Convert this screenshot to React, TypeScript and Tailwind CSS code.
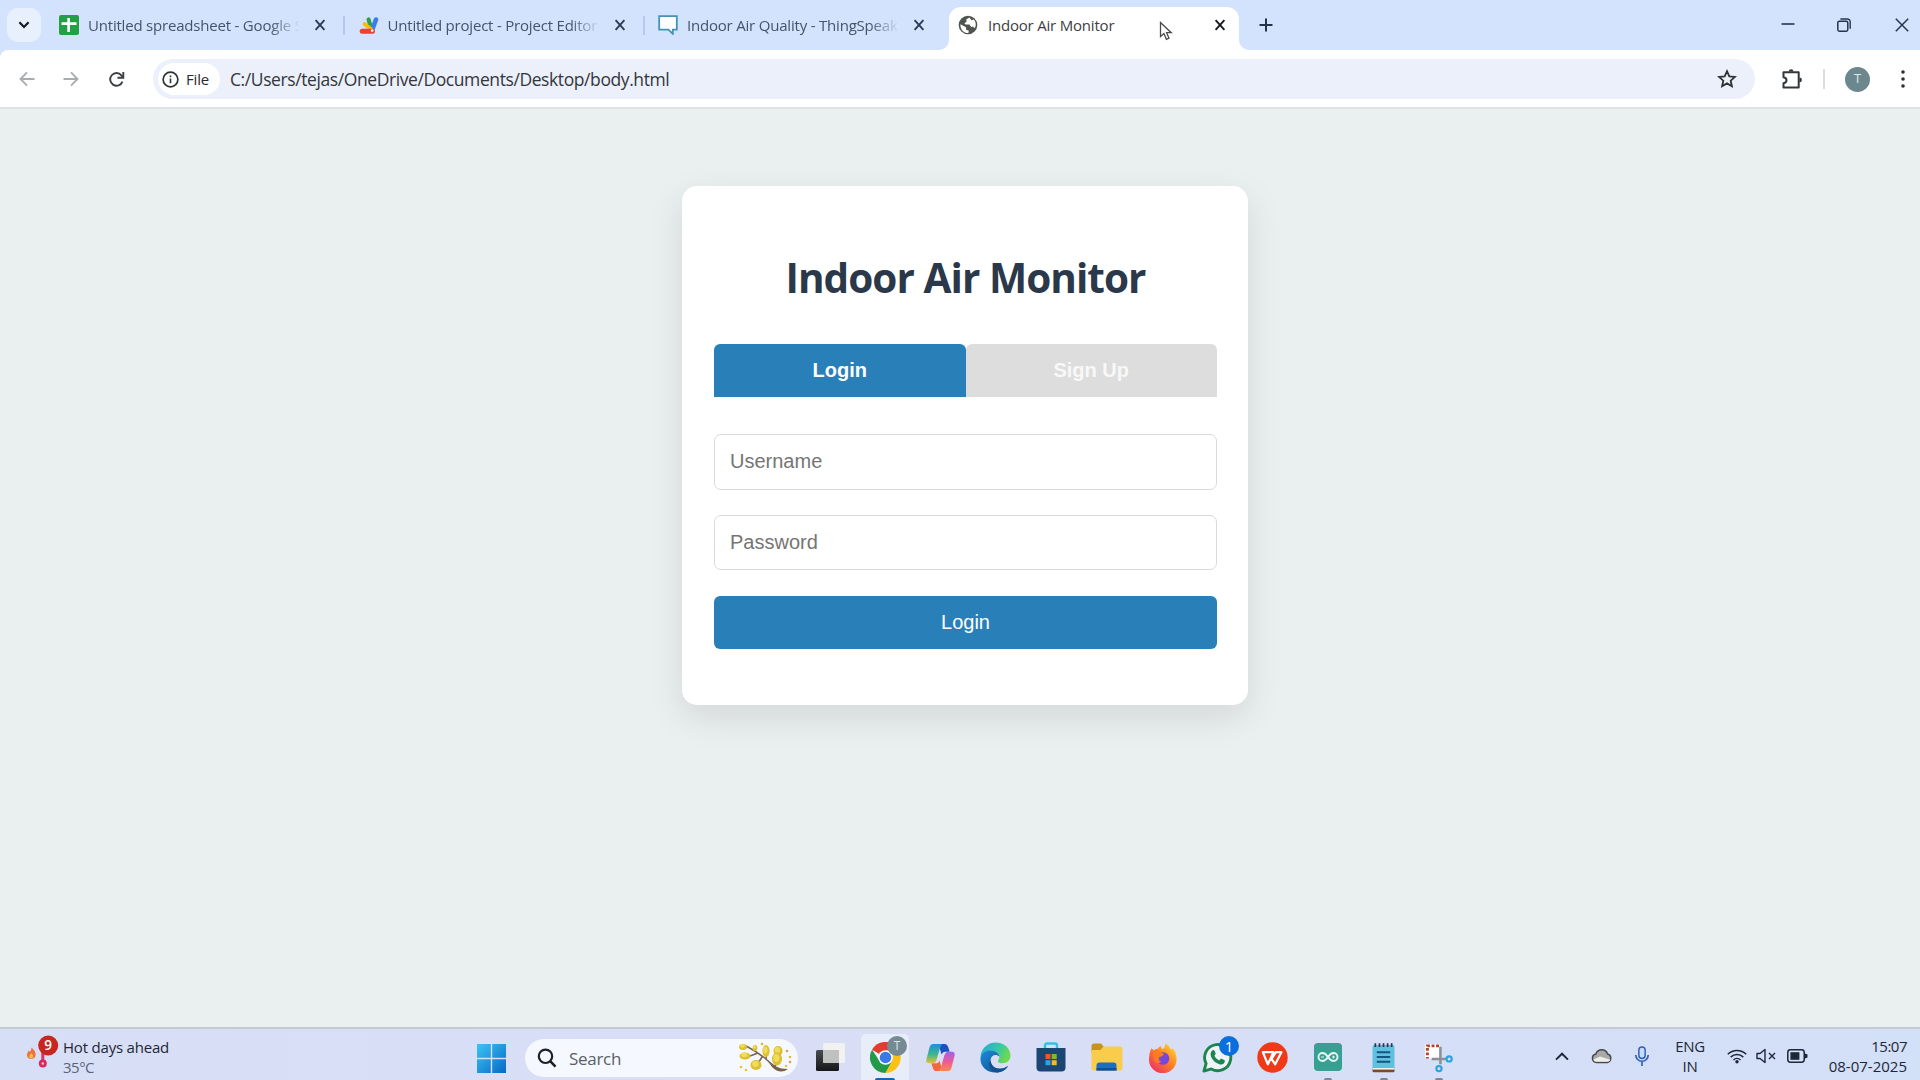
import type { ReactNode } from "react";

const ui = "font-['Open_Sans','Noto_Sans',sans-serif]";
const arial = "font-['Liberation_Sans',Arial,sans-serif]";

function Cross({ className }: { className: string }) {
  return (
    <svg viewBox="0 0 12 12" className={className}>
      <path d="M1.6 1.2 10.4 10.8M10.4 1.2 1.6 10.8" stroke="currentColor" strokeWidth="1.9" fill="none" />
    </svg>
  );
}

function SheetsIcon() {
  return (
    <svg viewBox="0 0 20 20" className="h-5 w-5">
      <rect width="20" height="20" rx="2" fill="#23a045" />
      <path d="M9.6 3v14M2.5 8.6h15" stroke="#fff" strokeWidth="2.6" />
    </svg>
  );
}

function AppsScriptIcon() {
  return (
    <svg viewBox="0 0 20 20" className="h-5 w-5">
      <path d="M12 13 9.600 4.500" stroke="#2e9e4f" strokeWidth="4.200" strokeLinecap="round" />
      <path d="M13.500 14 17 4.500" stroke="#3b7df0" strokeWidth="4.600" strokeLinecap="round" />
      <path d="M12 14 5.500 9" stroke="#fbbc04" strokeWidth="3.600" strokeLinecap="round" />
      <path d="M3.200 16.200h10.300" stroke="#ea4335" strokeWidth="5" strokeLinecap="round" />
      <circle cx="13.200" cy="15.600" r="1.300" fill="#fff" />
    </svg>
  );
}

function SpeechIcon() {
  return (
    <svg viewBox="0 0 20 20" className="h-5 w-5">
      <path d="M1.200 1.200h17.600v13.400h-4v4.200l-4.400-4.200H1.200z" fill="#fff" stroke="#4592b4" strokeWidth="1.800" />
    </svg>
  );
}

function GlobeIcon() {
  return (
    <svg viewBox="0 0 20 20" className="h-5 w-5">
      <circle cx="10" cy="10" r="9.300" fill="#50544f" />
      <path d="M2.400 9.200 8 12.200l.2 2.600 2.600 1-.4 2.200C6 18.200 2.200 14.800 2.400 9.200z" fill="#fff" />
      <path d="M11.400 2.600 8.200 4.600l.4 2.200-2.200 1.400 1.200 1.400h3.800l1.800 2.400 2-.4.8 1.400 1.200-.4a8 8 0 0 0-1.400-8l-2.200.6z" fill="#fff" />
    </svg>
  );
}

function TabTitle({ children, className }: { children: string; className: string }) {
  return (
    <div className={`w-[212px] whitespace-nowrap text-[15px] tracking-[-0.2px] text-[#465467] ${className}`}>{children}</div>
  );
}

function TabSeparator() {
  return <div className="ml-[17px] h-[19px] w-[2px] bg-[#b5c9ee]" />;
}

function Tab({ icon, title, fade, separator }: { icon: ReactNode; title: string; fade: string; separator?: boolean }) {
  return (
    <div className="flex h-full w-[299.5px] shrink-0 items-center">
      <div className="mr-[9px] shrink-0">{icon}</div>
      <TabTitle className={fade}>{title}</TabTitle>
      <Cross className="ml-[14px] h-[12px] w-[12px] text-[#2d3a50]" />
      {separator ? <TabSeparator /> : null}
    </div>
  );
}

function TabStrip() {
  const fade = "[mask-image:linear-gradient(to_right,black_86%,transparent)]";
  return (
    <div className="relative flex h-[50px] shrink-0 bg-[#d3e2fd]">
      <div className="ml-[7px] mt-[8px] flex h-[34px] w-[34px] items-center justify-center rounded-[11px] bg-[#e8f0fe]">
        <svg viewBox="0 0 12 8" className="h-[8px] w-[12px]">
          <path d="M1.4 1.3 6 6l4.6-4.7" stroke="#111b2c" strokeWidth="2.2" fill="none" />
        </svg>
      </div>
      <div className="ml-[18px] flex h-[50px] w-[880px]">
        <Tab icon={<SheetsIcon />} title="Untitled spreadsheet - Google S" fade={fade} separator />
        <Tab icon={<AppsScriptIcon />} title="Untitled project - Project Editor" fade={fade} separator />
        <Tab icon={<SpeechIcon />} title="Indoor Air Quality - ThingSpeak" fade={fade} />
      </div>
      <div className="flex h-[50px] items-end">
        <svg viewBox="0 0 10 10" className="h-[10px] w-[10px]">
          <path d="M10 0v10H0A10 10 0 0 0 10 0" fill="#fff" />
        </svg>
        <div className="flex h-[43px] w-[290px] items-center rounded-t-[12px] bg-white pb-[7px] pl-[9px]">
          <GlobeIcon />
          <div className="ml-[10px] w-[226px] whitespace-nowrap text-[15px] tracking-[-0.2px] text-[#3c4043]">Indoor Air Monitor</div>
          <Cross className="h-[12px] w-[12px] text-[#15181c]" />
        </div>
        <svg viewBox="0 0 10 10" className="h-[10px] w-[10px]">
          <path d="M0 0v10h10A10 10 0 0 1 0 0" fill="#fff" />
        </svg>
      </div>
      <svg viewBox="0 0 14 14" className="ml-[10px] mt-[18px] h-[14px] w-[14px]">
        <path d="M7 .5v13M.5 7h13" stroke="#24324a" strokeWidth="2" />
      </svg>
      <div className="ml-auto mr-[11px] flex h-[50px] items-center text-[#27344c]">
        <svg viewBox="0 0 14 14" className="mr-[42px] h-[14px] w-[14px]">
          <path d="M0.5 6h13" stroke="currentColor" strokeWidth="1.6" />
        </svg>
        <svg viewBox="0 0 14 14" className="mr-[44px] h-[14px] w-[14px]">
          <rect x=".8" y="3.2" width="10" height="10" rx="1.6" stroke="currentColor" strokeWidth="1.5" fill="none" />
          <path d="M3.4 1H10.4a2.8 2.8 0 0 1 2.8 2.8v7" stroke="currentColor" strokeWidth="1.4" fill="none" />
        </svg>
        <svg viewBox="0 0 14 14" className="h-[14px] w-[14px]">
          <path d="M.8.8l12.4 12.4M13.2.8.8 13.2" stroke="currentColor" strokeWidth="1.5" />
        </svg>
      </div>
      <svg viewBox="0 0 14 20" className="absolute left-[1159px] top-[21px] h-[20px] w-[14px]">
        <path d="M1.5 1.5v14l3.4-3 2.5 5.800 2.600-1.100-2.400-5.500h4.600z" fill="#fff" stroke="#4a4a4a" strokeWidth="1.300" />
      </svg>
    </div>
  );
}

function Toolbar() {
  return (
    <div className="bg-[#d3e2fd]">
      <div className="flex h-[59px] shrink-0 items-center rounded-tl-[8px] border-b-2 border-[#dfe3e4] bg-white pt-[1px]">
        <svg viewBox="0 0 16 16" className="ml-[19px] h-[16px] w-[16px]">
          <path d="M15.500 8H1.600M8 1.400 1.500 8 8 14.600" stroke="#a9adb1" strokeWidth="1.900" fill="none" />
        </svg>
        <svg viewBox="0 0 16 16" className="ml-[28px] h-[16px] w-[16px]">
          <path d="M.5 8h13.900M8 1.400 14.500 8 8 14.600" stroke="#a9adb1" strokeWidth="1.900" fill="none" />
        </svg>
        <svg viewBox="0 0 18 18" className="ml-[29px] h-[17px] w-[17px]">
          <path d="M15.300 11.200A6.700 6.700 0 1 1 14.200 4.600L16 6.600" stroke="#3b3e42" strokeWidth="2" fill="none" />
          <path d="M16.200 1v6.200H10" stroke="#3b3e42" strokeWidth="2" fill="none" />
        </svg>
        <div className="ml-[28px] flex h-[40px] w-[1602px] items-center rounded-full bg-[#ecf0fa]">
          <div className="ml-[5px] flex h-[32px] w-[62px] items-center rounded-full bg-white">
            <svg viewBox="0 0 18 18" className="ml-[4px] h-[17px] w-[17px]">
              <circle cx="9" cy="9" r="7.800" stroke="#2f3236" strokeWidth="1.800" fill="none" />
              <path d="M9 8v5M9 4.800v1.800" stroke="#2f3236" strokeWidth="1.700" />
            </svg>
            <span className="ml-[7px] text-[15px] tracking-[-0.2px] text-[#2a2a2e]">File</span>
          </div>
          <span className="ml-[10px] mt-[1px] whitespace-nowrap text-[17.500px] tracking-[-0.410px] text-[#33363d]">C:/Users/tejas/OneDrive/Documents/Desktop/body.html</span>
          <svg viewBox="0 0 20 20" className="ml-auto mr-[18px] h-[20px] w-[20px]">
            <path d="M10 2.200l2.300 5.100 5.600.6-4.200 3.800 1.200 5.500-4.900-2.800-4.900 2.800 1.200-5.500L2.100 7.900l5.600-.6z" stroke="#2e3136" strokeWidth="1.800" fill="none" />
          </svg>
        </div>
        <svg viewBox="0 0 22 22" className="ml-[26px] h-[22px] w-[22px]">
          <path d="M2.500 4.200h15.200v15.400H2.500v-4.400q3-.4 3-3t-3-3z" stroke="#33363a" strokeWidth="2" fill="none" strokeLinejoin="round" />
          <path d="M7.700 3.600a2.400 2.400 0 0 1 4.800 0zM18.500 9.600a2.400 2.400 0 0 1 0 4.800z" fill="#33363a" />
        </svg>
        <div className="ml-[20px] h-[20px] w-[2px] bg-[#dadde2]" />
        <div className="ml-[20px] flex h-[25px] w-[25px] items-center justify-center rounded-full bg-[#6d878f] text-[13px] text-[#dfe8ea]">T</div>
        <svg viewBox="0 0 4 18" className="ml-[31px] h-[18px] w-[4px]">
          <circle cx="2" cy="2" r="1.800" fill="#2c2f33" />
          <circle cx="2" cy="9" r="1.800" fill="#2c2f33" />
          <circle cx="2" cy="16" r="1.800" fill="#2c2f33" />
        </svg>
      </div>
    </div>
  );
}

function LoginPage() {
  return (
    <main className="flex flex-1 flex-col items-start bg-[#eaeff0] pl-[682px] pt-[77px]">
      <div className="flex h-[519px] w-[566px] flex-col rounded-[15px] bg-white pl-[32px] pr-[31px] shadow-[0_12px_36px_rgba(0,0,0,0.1)]">
        <h1 className="mt-[64px] whitespace-nowrap text-center text-[40.5px] font-bold leading-[56px] tracking-[-0.95px] text-[#2a3849]">Indoor Air Monitor</h1>
        <div className={`mt-[38px] flex h-[53px] text-[20px] font-bold text-white ${arial}`}>
          <button className="flex-1 rounded-t-[6px] bg-[#2980b9] pb-px">Login</button>
          <button className="flex-1 rounded-t-[6px] bg-[#ddd] pb-px text-[#f8f8f8]">Sign Up</button>
        </div>
        <input placeholder="Username" className={`mt-[37px] h-[56px] rounded-[7px] border-[1.5px] border-[#dadada] px-[15px] pb-px text-[20px] placeholder:text-[#757575] ${arial}`} />
        <input placeholder="Password" type="password" className={`mt-[25px] h-[55px] rounded-[7px] border-[1.5px] border-[#dadada] px-[15px] text-[20px] placeholder:text-[#757575] ${arial}`} />
        <button className={`mt-[26px] h-[53px] rounded-[6px] bg-[#2980b9] pb-px text-[20px] text-white ${arial}`}>Login</button>
      </div>
    </main>
  );
}

function WeatherIcon() {
  return (
    <svg viewBox="0 0 34 36" className="h-[36px] w-[34px]">
      <path d="M5.500 12.500C8 15 10 17 9.600 20c-.3 2.700-2 4-4.400 4S1 22.500 1 20c0-1.900 1-2.900 2-4.500l1 1.500c1-1.500 1.500-3 1.500-4.500z" fill="#f0703a" />
      <path d="M5.400 18.200c1.200 1.200 1.800 2 1.800 3.200a2 2 0 0 1-4 0c0-1.100 1-2 2.200-3.200z" fill="#fdc04c" />
      <path d="M16.800 14v12" stroke="#d6366a" strokeWidth="3" />
      <circle cx="16.800" cy="28.500" r="4" fill="#d6285f" />
      <circle cx="16.800" cy="28.500" r="1.300" fill="#f7b9cd" />
      <circle cx="22.200" cy="10.500" r="10" fill="#c8261e" />
      <text x="22.200" y="15.300" textAnchor="middle" fontSize="13.500" fontWeight="600" fill="#fff">9</text>
    </svg>
  );
}

function Mimosa() {
  const blobs: [number, number, number, number][] = [
    [5, 5, 4, 3], [7, 14, 5.5, 3.6], [18, 23, 5.5, 5], [28, 9, 3.6, 6], [17, 6, 2.4, 3], [40, 9, 4.5, 5], [39, 17, 5, 6.5],
  ];
  const dots: [number, number, string][] = [
    [3, 25, "#e5c531"], [8, 28, "#e5c531"], [49, 9, "#e29a52"], [52, 15, "#e5b631"], [52, 20, "#e29a52"], [24, 2, "#d8b82f"], [48, 24, "#e5c531"],
  ];
  return (
    <svg viewBox="0 0 54 32" className="h-[32px] w-[54px]">
      <path d="M8 4Q20 10 29 18T42 27M20 11l-8 3M28 17l1-8M24 15l-5 8M37 25l3-10" stroke="#7a624f" strokeWidth="1.500" fill="none" />
      <path d="M29 18Q36 27 50 27 42 33 34 25z" fill="#7a6049" />
      {blobs.map(([x, y, rx, ry]) => (
        <g key={`${x}-${y}`}>
          <ellipse cx={x} cy={y} rx={rx} ry={ry} fill="#dcc02e" />
          <ellipse cx={x - 0.6} cy={y - 1} rx={rx * 0.6} ry={ry * 0.6} fill="#f0dc5c" />
        </g>
      ))}
      {dots.map(([x, y, c]) => (
        <circle key={`${x}-${y}`} cx={x} cy={y} r="1.300" fill={c} />
      ))}
    </svg>
  );
}

function ChromeIcon() {
  return (
    <svg viewBox="0 0 32 32" className="h-[31px] w-[31px]">
      <path d="M16 16 2.100 8A16 16 0 0 1 29.900 8z" fill="#e33b2e" />
      <path d="M9.800 19.700 2.140 8A16 16 0 0 0 16 32L23 20z" fill="#229a48" />
      <path d="M16 8.500h13.900A16 16 0 0 1 16 32l6.500-12.200z" fill="#fbc116" />
      <circle cx="16" cy="16" r="7.600" fill="#fff" />
      <circle cx="16" cy="16" r="6" fill="#3b78e8" />
    </svg>
  );
}

function CopilotIcon() {
  return (
    <svg viewBox="0 0 32 30" className="h-[29px] w-[31px]">
      <defs>
        <linearGradient id="cpA" x1="0" y1="0" x2="0" y2="1">
          <stop offset="0" stopColor="#1f8fe0" />
          <stop offset=".55" stopColor="#3fb78c" />
          <stop offset="1" stopColor="#e9c12e" />
        </linearGradient>
        <linearGradient id="cpB" x1="0" y1="0" x2="0" y2="1">
          <stop offset="0" stopColor="#a561e8" />
          <stop offset=".5" stopColor="#ea5a9a" />
          <stop offset="1" stopColor="#fb8a4a" />
        </linearGradient>
      </defs>
      <path d="M14 1h6q3 0 3.800 3L25.500 9H21q-3 0-4 3z" fill="#1d4fc4" />
      <path d="M18 29h-6q-3 0-3.800-3L6.500 21H11q3 0 4-3z" fill="#f2683c" />
      <path d="M8.500 1H18q-1.600 1-2.400 4L12 17q-1 4-4.500 4H4.200Q.5 21 1.500 16.500L4.500 5Q5.500 1 8.500 1z" fill="url(#cpA)" />
      <path d="M23.500 29H14q1.600-1 2.400-4L20 13q1-4 4.500-4h3.300q3.700 0 2.700 4.500L27.500 25q-1 4-4 4z" fill="url(#cpB)" />
    </svg>
  );
}

function EdgeIcon() {
  return (
    <svg viewBox="0 0 32 32" className="h-[31px] w-[31px]">
      <defs>
        <linearGradient id="edA" x1="0" y1="0" x2="1" y2=".4">
          <stop offset="0" stopColor="#2aa5dd" />
          <stop offset=".6" stopColor="#37c6a6" />
          <stop offset="1" stopColor="#6cd951" />
        </linearGradient>
        <linearGradient id="edB" x1="0" y1="0" x2="1" y2="1">
          <stop offset="0" stopColor="#1b8bd8" />
          <stop offset="1" stopColor="#114a8b" />
        </linearGradient>
      </defs>
      <path d="M.8 13A15.600 15.600 0 0 1 16 .500C25 .500 31.500 6.500 31.500 14c0 5-3.500 8-8 8-3 0-5-1-5-2.500 0-1 1.500-1.500 1.500-4C20 12 16.500 9 12 9 7 9 2.500 11 .8 17z" fill="url(#edA)" />
      <path d="M.5 17C1.200 11.500 6 8.800 11 8.800c5 0 9 3 9 6.500-1-1.500-2.500-2-4-2-3 0-5 2.500-5 5.700 0 5 4.500 8.500 9.500 8.500 3.500 0 6-1 8.500-2.700C26.500 29 22 31.500 16 31.500 7 31.500 0 25 .5 17z" fill="url(#edB)" />
      <path d="M11 19c0 5 4.500 8.500 9.500 8.500 3.500 0 6-1 8.500-2.700-2.500 4.200-6.500 6.400-11.500 6.700C10 30 7.500 22 11 19z" fill="#14518f" />
    </svg>
  );
}

function StoreIcon() {
  return (
    <svg viewBox="0 0 30 30" className="h-[30px] w-[30px]">
      <path d="M9 7V3.500Q9 1.500 11 1.500h8q2 0 2 2V7" stroke="#35bfe6" strokeWidth="2.400" fill="none" />
      <path d="M.5 6h29v19.500q0 4-4 4h-21q-4 0-4-4z" fill="#1b4674" />
      <path d="M9.500 12h5v5h-5z" fill="#f1532b" />
      <path d="M15.700 12h5v5h-5z" fill="#7fba2a" />
      <path d="M9.500 18.200h5v5h-5z" fill="#25a5ea" />
      <path d="M15.700 18.200h5v5h-5z" fill="#fbb91a" />
    </svg>
  );
}

function FolderIcon() {
  return (
    <svg viewBox="0 0 32 28" className="h-[28px] w-[32px]">
      <path d="M.5 3q0-2.500 2.500-2.500h7L13 4v6H.5z" fill="#c9921a" />
      <path d="M.5 7h9l3-3.500H29q2.500 0 2.500 2.500v19q0 2.500-2.500 2.500H3Q.5 27.500.5 25z" fill="#f9cc4c" />
      <path d="M5.500 27.500v-5q0-3 3-3h14q3 0 3 3v5z" fill="#1a6fc0" />
      <path d="M5.500 25h20v2.500h-20z" fill="#0f4f96" />
    </svg>
  );
}

function FirefoxIcon() {
  return (
    <svg viewBox="0 0 32 32" className="h-[31px] w-[31px]">
      <defs>
        <linearGradient id="ff" x1="1" y1="0" x2=".15" y2="1">
          <stop offset="0" stopColor="#ffe53d" />
          <stop offset=".45" stopColor="#ff8a1f" />
          <stop offset="1" stopColor="#ee2a68" />
        </linearGradient>
      </defs>
      <path d="M4.500 6.500 7 8.500q2-1.500 4-1.500Q12 5 14 4l1.500 3.500q3-1 3.500-6 4 2 6 6.500l1.500-1.500Q30.500 11 30.500 18A14.200 14.200 0 0 1 2 18Q2 11 4.500 6.500z" fill="url(#ff)" />
      <circle cx="16.500" cy="17" r="6.500" fill="#7647d8" />
      <path d="M6 11.500q4.500-2.500 7.500-.5 2.500 0 4 1-1 3-5 3.500-1.500 4 2.500 4.500Q9.500 24 7 18.500z" fill="#ff7a22" />
    </svg>
  );
}

function WhatsAppIcon() {
  return (
    <svg viewBox="0 0 32 32" className="h-[31px] w-[31px]">
      <path d="M2 30l2.200-7.800A13.500 13.500 0 1 1 9.600 27.800z" fill="#eef4f6" stroke="#1d8450" strokeWidth="3" strokeLinejoin="round" />
      <path d="M11 8.500c1-.4 1.600 0 2 .9l1 2.300c.3.800-.2 1.400-1.200 2.500 1 2.300 2.800 3.900 5 4.800 1.200-1.500 1.700-1.900 2.400-1.600l2.700 1.300c.8.400.9 1.200.3 2.400-1 1.900-3.300 2.500-5.300 1.900C13.500 21.600 10 18 9 14c-.5-2.200.5-4.800 2-5.500z" fill="#1d8450" />
    </svg>
  );
}

function WpsIcon() {
  return (
    <svg viewBox="0 0 32 32" className="h-[31px] w-[31px]">
      <circle cx="16" cy="16" r="15.700" fill="#f03a17" />
      <path d="M6 10.500h11L11.200 23zM15 17.500l3.800 5.500 6.400-12.500h-5.700l-4.500 7" stroke="#fff" strokeWidth="2.300" fill="none" strokeLinejoin="round" />
    </svg>
  );
}

function ArduinoIcon() {
  return (
    <svg viewBox="0 0 28 28" className="h-[28px] w-[28px]">
      <rect width="28" height="28" rx="4" fill="#38a093" />
      <path d="M14 14c-2-3-3.500-4-5.500-4a4 4 0 0 0 0 8c2 0 3.500-1 5.500-4s3.500-4 5.500-4a4 4 0 0 1 0 8c-2 0-3.500-1-5.500-4z" stroke="#e4f5f2" strokeWidth="1.900" fill="none" />
      <path d="M7 14h3M18 14h3M19.500 12.500v3" stroke="#e4f5f2" strokeWidth="1" />
    </svg>
  );
}

function NotepadIcon() {
  return (
    <svg viewBox="0 0 24 32" className="h-[31px] w-[23px]">
      <rect x=".5" y="3" width="23" height="26" rx="2" fill="#5fc0df" />
      <path d="M.5 27.500h23V30q0 1.500-1.500 1.500H2Q.5 31.500.5 30z" fill="#7d4a2d" />
      <path d="M.5 27h23v1.600H.5z" fill="#f2f6f8" />
      <path d="M3.500 1v4M7.800 1v4M12 1v4M16.300 1v4M20.500 1v4" stroke="#1c3a50" strokeWidth="1.800" />
      <path d="M5 10.500h14M5 15.500h14M5 20.500h14" stroke="#13577f" strokeWidth="2" />
    </svg>
  );
}

function SnipIcon() {
  return (
    <svg viewBox="0 0 30 32" className="h-[31px] w-[29px]">
      <rect x="1" y="2" width="15" height="15" fill="#fff" />
      <path d="M15.500 4H3.500v13" stroke="#b5402c" strokeWidth="3" strokeDasharray="3 1.700" fill="none" />
      <path d="M17 5v18M8 17.500h15" stroke="#8a8f98" strokeWidth="2.600" />
      <circle cx="26" cy="17.500" r="2.700" stroke="#2aa3e0" strokeWidth="2.200" fill="none" />
      <circle cx="15.500" cy="27.500" r="2.700" stroke="#2aa3e0" strokeWidth="2.200" fill="none" />
    </svg>
  );
}

function TaskbarItem({ children, mark }: { children: ReactNode; mark?: string }) {
  return (
    <div className="relative flex h-[46px] w-[55.4px] shrink-0 items-center justify-center">
      {children}
      {mark ? <div className={`absolute bottom-0 h-[2px] rounded-t-[2px] ${mark}`} /> : null}
    </div>
  );
}

function Taskbar() {
  return (
    <footer className="flex h-[53px] shrink-0 items-end border-t-2 border-[#c5c9d2] bg-gradient-to-r from-[#d7dff6] via-[#d9def5] to-[#d2e0f8]">
      <div className="flex h-[51px] w-[477px] items-start pl-[26px]">
        <div className="mt-[6px]">
          <WeatherIcon />
        </div>
        <div className="ml-[3px] mt-[8px] text-[15px] leading-[20px] text-[#1f2635]">
          <div className="whitespace-nowrap tracking-[-0.2px]">Hot days ahead</div>
          <div className="tracking-[-0.5px] text-[#59627a]">35°C</div>
        </div>
      </div>
      <svg viewBox="0 0 29 29" className="mb-[7px] h-[29px] w-[29px]">
        <defs>
          <linearGradient id="win" x1="0" y1="0" x2="1" y2="1">
            <stop offset="0" stopColor="#3cc4f5" />
            <stop offset="1" stopColor="#0669c4" />
          </linearGradient>
        </defs>
        <path d="M0 0h13.800v13.800H0zM15.200 0H29v13.800H15.200zM0 15.200h13.800V29H0zM15.200 15.200H29V29H15.200z" fill="url(#win)" />
      </svg>
      <div className="mb-[3px] ml-[19px] flex h-[38px] w-[273px] items-center rounded-full bg-[#f5f8fe]">
        <svg viewBox="0 0 20 20" className="ml-[12px] h-[20px] w-[20px]">
          <circle cx="8.500" cy="8.300" r="6.700" stroke="#1d2127" strokeWidth="2.200" fill="none" />
          <path d="M13.200 13.200 18.500 18.600" stroke="#1d2127" strokeWidth="2.600" />
        </svg>
        <span className="ml-[12px] mt-[1px] text-[17px] tracking-[-0.3px] text-[#5a5f68]">Search</span>
        <div className="ml-auto mr-[6px]">
          <Mimosa />
        </div>
      </div>
      <div className="ml-[4px] flex">
        <TaskbarItem>
          <svg viewBox="0 0 30 30" className="h-[30px] w-[30px]">
            <defs>
              <linearGradient id="tv" x1="0" y1="0" x2="0" y2="1">
                <stop offset="0" stopColor="#4a4d50" />
                <stop offset="1" stopColor="#141618" />
              </linearGradient>
            </defs>
            <rect x="1" y="8" width="23" height="21" rx="1.500" fill="url(#tv)" />
            <rect x="8" y="1" width="22" height="20" rx="1.500" fill="#f4f4f0" opacity=".9" />
            <path d="M8 8h16v13H9.500Q8 21 8 19.500z" fill="#bfc1c1" />
          </svg>
        </TaskbarItem>
        <TaskbarItem mark="w-[20px] bg-[#1763b5]">
          <div className="relative flex h-[46px] w-[48px] items-center justify-center rounded-t-[5px] bg-[#e8edfa]">
            <ChromeIcon />
            <div className="absolute right-[2px] top-[2px] flex h-[20px] w-[20px] items-center justify-center rounded-full bg-[#758a93] text-[12px] text-[#dbe4e7]">T</div>
          </div>
        </TaskbarItem>
        <TaskbarItem><CopilotIcon /></TaskbarItem>
        <TaskbarItem><EdgeIcon /></TaskbarItem>
        <TaskbarItem><StoreIcon /></TaskbarItem>
        <TaskbarItem><FolderIcon /></TaskbarItem>
        <TaskbarItem><FirefoxIcon /></TaskbarItem>
        <TaskbarItem>
          <WhatsAppIcon />
          <div className="absolute right-[6px] top-[2px] flex h-[20px] w-[20px] items-center justify-center rounded-full bg-[#0a6fdc] text-[15px] text-white">1</div>
        </TaskbarItem>
        <TaskbarItem><WpsIcon /></TaskbarItem>
        <TaskbarItem mark="w-[8px] bg-[#7f8596]"><ArduinoIcon /></TaskbarItem>
        <TaskbarItem mark="w-[8px] bg-[#7f8596]"><NotepadIcon /></TaskbarItem>
        <TaskbarItem mark="w-[8px] bg-[#7f8596]"><SnipIcon /></TaskbarItem>
      </div>
      <div className="ml-auto mr-[13px] flex h-[48px] items-center text-[#1e2738]">
        <svg viewBox="0 0 14 9" className="h-[9px] w-[14px]">
          <path d="M1 7.600 7 1.700l6 5.900" stroke="currentColor" strokeWidth="1.900" fill="none" />
        </svg>
        <svg viewBox="0 0 22 16" className="ml-[22px] h-[16px] w-[22px]">
          <path d="M5.500 14.500a4.300 4.300 0 0 1-.6-8.500A6.200 6.200 0 0 1 16.600 6a4.400 4.400 0 0 1-.2 8.500z" fill="#a9a9a9" stroke="#45474b" strokeWidth="1.500" />
          <path d="M5.500 13.700q-2.500 0-3.400-2L9 8.500l10.500 3.300q-1 1.900-3 1.900z" fill="#efeee6" />
        </svg>
        <svg viewBox="0 0 16 22" className="ml-[21px] h-[21px] w-[16px]">
          <rect x="4.700" y="1" width="6.600" height="12" rx="3.300" stroke="#2d5fb4" strokeWidth="1.500" fill="#c9dcf7" />
          <path d="M1.500 9.500a6.500 6.500 0 0 0 13 0M8 16v5" stroke="#2d5fb4" strokeWidth="1.700" fill="none" />
        </svg>
        <div className="ml-[25px] w-[30px] text-center text-[15px] leading-[20px] tracking-[-0.3px]">
          <div>ENG</div>
          <div>IN</div>
        </div>
        <svg viewBox="0 0 20 16" className="ml-[22px] h-[16px] w-[20px]">
          <path d="M.8 6.200a13 13 0 0 1 18.400 0M3.700 9.100a9 9 0 0 1 12.600 0M6.500 12a5 5 0 0 1 7 0" stroke="currentColor" strokeWidth="1.500" fill="none" />
          <circle cx="10" cy="13.700" r="1.700" fill="currentColor" />
        </svg>
        <svg viewBox="0 0 20 16" className="ml-[9px] h-[16px] w-[20px]">
          <path d="M1 5.500h3L9 1.500v13l-5-4H1z" stroke="currentColor" strokeWidth="1.400" fill="none" strokeLinejoin="round" />
          <path d="M13 5l6 6M19 5l-6 6" stroke="currentColor" strokeWidth="1.400" />
        </svg>
        <svg viewBox="0 0 21 14" className="ml-[11px] h-[14px] w-[21px]">
          <rect x=".8" y=".8" width="16.400" height="12.400" rx="2.600" stroke="currentColor" strokeWidth="1.500" fill="none" />
          <rect x="3.400" y="3.200" width="9" height="7.600" fill="currentColor" />
          <path d="M17.500 4.300 20.500 5.500v3l-3 1.200z" fill="currentColor" />
        </svg>
        <div className="ml-[20px] w-[79px] whitespace-nowrap text-right text-[15px] leading-[20px]">
          <div className="tracking-[-0.5px]">15:07</div>
          <div>08-07-2025</div>
        </div>
      </div>
    </footer>
  );
}

export default function App() {
  return (
    <div className={`flex h-[1080px] w-[1920px] flex-col overflow-hidden ${ui}`}>
      <TabStrip />
      <Toolbar />
      <LoginPage />
      <Taskbar />
    </div>
  );
}
